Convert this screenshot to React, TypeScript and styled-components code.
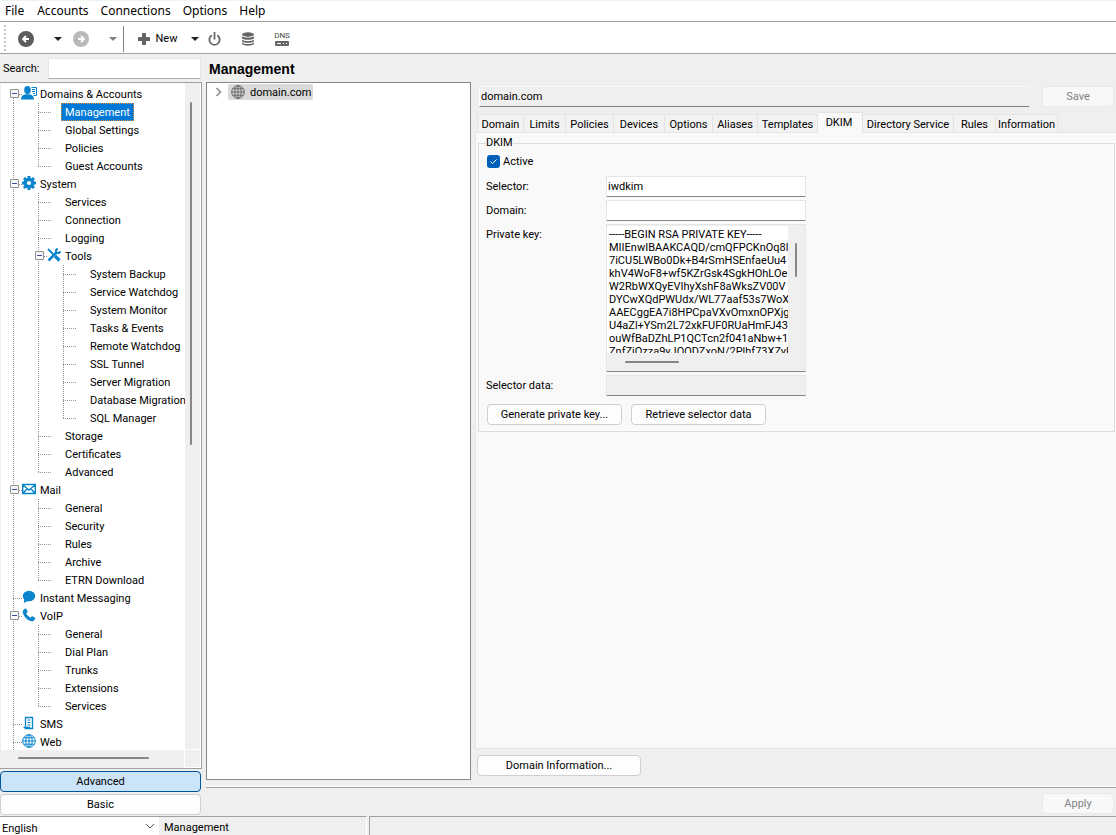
import React from 'react';
import styled, { createGlobalStyle, css } from 'styled-components';

const Global = createGlobalStyle`
  * { box-sizing: border-box; }
  body { margin: 0; background: #efefef; }
  body, button, input, textarea, select {
    font-family: Roboto, "Liberation Sans", sans-serif;
    font-size: 11px;
    color: #000;
  }
  button, input, textarea, select { margin: 0; padding: 0; outline: none; }
`;

const LINE = '#a0a0a0';

const Window = styled.div`
  display: flex;
  flex-direction: column;
  height: 100vh;
  background: #efefef;
`;
const MenuBar = styled.nav`
  display: flex;
  height: 22px;
  flex: none;
  background: #fff;
  border-top: 1px solid #eef4f2;
  border-bottom: 1px solid ${LINE};
`;
const MenuItem = styled.button`
  border: 0;
  background: none;
  padding: 0 6px;
  font-family: "Noto Sans", sans-serif;
  font-size: 12px;
  line-height: 20px;
  &:first-child { padding: 0 7px 0 5px; }
`;
const ToolBar = styled.div`
  display: flex;
  align-items: center;
  height: 32px;
  flex: none;
  padding-top: 2px;
  background: #fff;
  border-bottom: 1px solid ${LINE};
`;
const Grip = styled.span`
  width: 2px;
  height: 28px;
  margin: 0 10px 0 4px;
  background: repeating-linear-gradient(to bottom, #c4c4c4 0 2px, transparent 2px 4px);
`;
const ToolButton = styled.button<{ $w: number; $gap?: number }>`
  display: flex;
  align-items: center;
  justify-content: center;
  gap: 6px;
  width: ${p => p.$w}px;
  height: 28px;
  margin-left: ${p => p.$gap ?? 0}px;
  border: 0;
  background: none;
`;
const Separator = styled.span`
  width: 1px;
  height: 26px;
  margin: 0 1px;
  background: #808080;
`;
const Body = styled.div`
  display: flex;
  flex: 1;
  min-height: 0;
`;
const Side = styled.aside`
  display: flex;
  flex-direction: column;
  width: 202px;
  flex: none;
  padding-bottom: 1px;
`;
const SearchRow = styled.label`
  display: flex;
  align-items: center;
  height: 28px;
  padding: 1px 1px 0 3px;
`;
const SearchText = styled.span`
  width: 45px;
`;
const field = css`
  border: 1px solid #e5e5e5;
  border-bottom: 1px solid #868686;
  background: #fff;
  border-radius: 1px;
`;
const SearchInput = styled.input`
  ${field}
  flex: 1;
  min-width: 0;
  height: 21px;
  border-bottom-color: #b0b0b0;
`;
const TreeFrame = styled.div`
  display: grid;
  grid-template: minmax(0, 1fr) 18px / minmax(0, 1fr) 16px;
  flex: 1;
  min-height: 0;
  padding-left: 1px;
  border: solid ${LINE};
  border-width: 1px 1px 1px 0;
`;
const Tree = styled.div`
  background: #fff;
  padding-top: 2px;
  overflow: hidden;
`;
const ScrollV = styled.div`
  border-right: 1px solid #fff;
  border-bottom: 1px solid #fff;
  padding: 19px 0 0 5px;
`;
const ScrollH = styled.div`
  border-right: 1px solid #fff;
  padding: 7px 0 0 17px;
`;
const Corner = styled.div`
  border: solid #fff;
  border-width: 0 1px 1px 0;
`;
const Thumb = styled.div<{ $w: string; $h: string }>`
  width: ${p => p.$w};
  height: ${p => p.$h};
  border-radius: 1px;
  background: #868686;
`;
const Row = styled.div`
  display: flex;
  height: 18px;
  white-space: nowrap;
`;
const vDots = 'repeating-linear-gradient(to bottom, #949494 0 1px, transparent 1px 2px)';
const hDots = 'repeating-linear-gradient(to right, #949494 0 1px, transparent 1px 2px)';
const Guide = styled.span`
  width: 25px;
  flex: none;
  background: ${vDots} 12px 0 / 1px 100% no-repeat;
`;
const Elbow = styled.span<{ $from: string; $h: string }>`
  display: flex;
  align-items: center;
  width: 21px;
  flex: none;
  padding: 0 0 1px 9px;
  background:
    ${vDots} 12px ${p => p.$from} / 1px ${p => p.$h} no-repeat,
    ${hDots} 12px 9px / 14px 1px no-repeat;
`;
const Expander = styled.button`
  display: flex;
  align-items: center;
  justify-content: center;
  width: 9px;
  height: 9px;
  border: 1px solid #8f8f8f;
  border-radius: 1px;
  background: #f8f8f8;
  &::before { content: ""; width: 5px; height: 1px; background: #3c4fa8; }
`;
const IconSlot = styled.span<{ $leaf: boolean }>`
  display: flex;
  align-items: center;
  justify-content: center;
  width: 14px;
  flex: none;
  padding-bottom: 2px;
  background: ${p => (p.$leaf ? `${hDots} 1px 9px / 4px 1px no-repeat` : 'none')};
  svg { flex: none; }
`;
const Label = styled.span<{ $on?: boolean }>`
  padding: ${p => (p.$on ? '1px 3px 0' : '2px 4px 0')};
  border: ${p => (p.$on ? '1px dotted #e8923c' : '0')};
  background: ${p => (p.$on ? '#0078d7' : 'none')};
  color: ${p => (p.$on ? '#fff' : '#000')};
  line-height: 16px;
`;
const button = css`
  border: 1px solid #cfcfcf;
  border-radius: 4px;
  background: #fdfdfd;
`;
const ModeButton = styled.button<{ $on?: boolean }>`
  ${button}
  height: 21px;
  flex: none;
  margin: 2px 1px 0 0;
  ${p => p.$on && css`border-color: #005499; background: #cce4f7;`}
`;
const Main = styled.main`
  display: flex;
  flex-direction: column;
  flex: 1;
  min-width: 0;
  padding-left: 4px;
`;
const Title = styled.h1`
  margin: 0;
  padding-left: 3px;
  height: 28px;
  flex: none;
  font: bold 14px/30px "Liberation Sans", sans-serif;
`;
const Columns = styled.div`
  display: flex;
  flex: 1;
  min-height: 0;
`;
const DomainList = styled.div`
  width: 265px;
  flex: none;
  margin-bottom: 7px;
  padding-left: 6px;
  border: 1px solid #828790;
  background: #fff;
`;
const DomainRow = styled.div`
  display: flex;
  align-items: center;
  height: 18px;
  gap: 5px;
`;
const DomainChip = styled.span`
  display: flex;
  align-items: center;
  gap: 5px;
  height: 16px;
  padding: 0 2px 0 3px;
  border-radius: 2px;
  background: #d9d9d9;
`;
const PlainButton = styled.button`
  display: flex;
  padding: 0;
  border: 0;
  background: none;
`;
const Detail = styled.section`
  display: flex;
  flex-direction: column;
  flex: 1;
  min-width: 0;
  padding-left: 4px;
`;
const NameRow = styled.div`
  display: flex;
  align-items: center;
  gap: 13px;
  margin-top: 4px;
  padding: 0 2px 0 4px;
`;
const NameInput = styled.input`
  flex: 1;
  min-width: 0;
  height: 21px;
  padding: 0 1px;
  border: solid #fbfbfb;
  border-width: 1px 0 0 1px;
  border-bottom: 1px solid #7d7d7d;
  background: #efefef;
`;
const PaleButton = styled.button`
  width: 72px;
  height: 21px;
  flex: none;
  border: 1px solid #e9e9e9;
  border-radius: 4px;
  background: #f8f8f8;
  color: #838383;
`;
const TabList = styled.div`
  display: flex;
  align-items: flex-end;
  height: 25px;
  padding-left: 2px;
  flex: none;
`;
const Tab = styled.button<{ $w: number; $on?: boolean }>`
  width: ${p => p.$w}px;
  height: ${p => (p.$on ? 21 : 18)}px;
  flex: none;
  border: solid #e3e3e3;
  border-width: 1px 1px 0 0;
  background: ${p => (p.$on ? '#f9f9f9' : '#f2f2f2')};
  padding: ${p => (p.$on ? '0 2px 2px 0' : '1px 0 0')};
  margin-bottom: ${p => (p.$on ? -1 : 0)}px;
  ${p => p.$on && css`z-index: 1;`}
  &:first-child { border-left-width: 1px; }
`;
const Panel = styled.div`
  flex: 1;
  min-height: 0;
  padding: 3px 1px 0 2px;
  border: solid #e5e5e5;
  border-width: 1px 0 1px 1px;
  background: #f9f9f9;
`;
const Group = styled.fieldset`
  margin: 0;
  padding: 4px 7px 6px 7px;
  border: 1px solid #dcdcdc;
`;
const Legend = styled.legend`
  padding: 0;
  line-height: 14px;
`;
const CheckLabel = styled.label`
  display: flex;
  align-items: center;
  gap: 3px;
  height: 15px;
  padding-left: 1px;
`;
const Check = styled.input`
  appearance: none;
  width: 13px;
  height: 13px;
  border-radius: 3px;
  background: #005fb8 url("data:image/svg+xml,%3Csvg xmlns='http://www.w3.org/2000/svg' viewBox='0 0 13 13'%3E%3Cpath d='M3.5 6.5l2 2 4-4' fill='none' stroke='white'/%3E%3C/svg%3E");
`;
const Form = styled.div`
  display: grid;
  grid-template-columns: 120px 200px;
  row-gap: 3px;
  margin-top: 7px;
`;
const FormLabel = styled.label`
  line-height: 21px;
`;
const TextInput = styled.input`
  ${field}
  height: 21px;
  padding: 0 1px;
  &:read-only { background: #efefef; }
`;
const KeyBox = styled.div`
  ${field}
  display: grid;
  grid-template: minmax(0, 1fr) 18px / minmax(0, 1fr) 17px;
  height: 148px;
  padding-top: 1px;
  background: #efefef;
`;
const KeyText = styled.textarea`
  display: block;
  width: 100%;
  height: 100%;
  border: 0;
  padding: 2px 2px 0;
  resize: none;
  overflow: hidden;
  white-space: pre;
  line-height: 13px;
  background: #fff;
`;
const KeyScrollV = styled.div`
  padding: 17px 0 0 7px;
`;
const KeyScrollH = styled.div`
  padding: 8px 0 0 18px;
`;
const Buttons = styled.div`
  display: flex;
  gap: 9px;
  margin-top: 8px;
  padding-left: 1px;
`;
const Button = styled.button<{ $w: number }>`
  ${button}
  width: ${p => p.$w}px;
  height: 21px;
`;
const InfoRow = styled.div`
  padding: 6px 0 11px 2px;
  flex: none;
`;
const ApplyRow = styled.div`
  display: flex;
  justify-content: flex-end;
  height: 29px;
  flex: none;
  padding: 5px 2px 0 0;
  border-top: 1px solid ${LINE};
  box-shadow: 0 -1px 0 #fff;
`;
const StatusBar = styled.footer`
  display: flex;
  height: 19px;
  flex: none;
  line-height: 22px;
`;
const LangBox = styled.div`
  display: flex;
  align-items: center;
  width: 159px;
  padding-right: 4px;
  border: solid ${LINE};
  border-width: 1px 0 0;
  background: #fff;
`;
const Lang = styled.select`
  appearance: none;
  flex: 1;
  height: 18px;
  padding: 4px 0 0 2px;
  border: 0;
  background: none;
`;
const StatusCell = styled.span`
  width: 208px;
  padding-left: 5px;
  border-top: 1px solid ${LINE};
  border-right: 1px solid #fff;
`;
const StatusRest = styled.span`
  flex: 1;
  margin-left: 2px;
  border: solid ${LINE};
  border-width: 1px 0 0 1px;
`;

const BLUE = '#0a84cc';

const Globe = ({ color }: { color: string }) => (
  <svg width="14" height="14" viewBox="0 0 14 14" fill="none" stroke={color} strokeWidth="1">
    <circle cx="7" cy="7" r="6.3" />
    <ellipse cx="7" cy="7" rx="3.2" ry="6.3" />
    <path d="M7 .7v12.6M.7 7h12.6M1.6 3.8h10.8M1.6 10.2h10.8" />
  </svg>
);

const icons: Record<string, React.ReactNode> = {
  user: (
    <svg width="17" height="14" viewBox="0 0 17 14" fill={BLUE}>
      <ellipse cx="6.5" cy="4" rx="3.3" ry="4" />
      <path d="M0 13.500c0-3.600 2.200-4.500 4.800-5.200h3.400c2.600.7 4.800 1.600 4.800 5.200z" />
      <path d="M10.500 1.500h5v8h-3" fill="none" stroke={BLUE} />
      <path d="M11 3.500h3M11 5.500h3M12 7.500h2" stroke={BLUE} />
    </svg>
  ),
  gear: (
    <svg width="14" height="14" viewBox="0 0 14 14">
      <circle cx="7" cy="7" r="3.700" fill="none" stroke={BLUE} strokeWidth="3.200" />
      <path d="M7 0v3M7 11v3M0 7h3M11 7h3M2 2l2 2M10 10l2 2M12 2l-2 2M4 10l-2 2" stroke={BLUE} strokeWidth="3" />
    </svg>
  ),
  tools: (
    <svg width="14" height="14" viewBox="0 0 14 14" fill="none" stroke={BLUE}>
      <path d="M1 1l5.500 5.500" strokeWidth="1.800" />
      <path d="M8 8l4.500 4.500" strokeWidth="3.200" />
      <path d="M1.500 12.500l8-8" strokeWidth="2.600" />
      <path d="M10.800.8c-2 .6-2.400 2.600-1.200 3.700s3.200.5 3.700-1.200" strokeWidth="2" />
    </svg>
  ),
  mail: (
    <svg width="14" height="12" viewBox="0 0 14 12" fill="none" stroke={BLUE} strokeWidth="1.400">
      <path d="M.7 1.500h12.600v9H.7zM1 2l6 5 6-5M1 10.200l4.200-4.500M13 10.200L8.800 5.700" />
    </svg>
  ),
  chat: (
    <svg width="14" height="14" viewBox="0 0 14 14" fill={BLUE}>
      <ellipse cx="7" cy="6" rx="6.200" ry="5.200" />
      <path d="M2.500 8.500L1.700 13 7 10.500z" />
    </svg>
  ),
  phone: (
    <svg width="14" height="14" viewBox="0 0 14 14" fill={BLUE}>
      <path d="M1.200 2.200L3 .6c.5-.3 1-.2 1.300.3L5.500 3c.3.6.1 1-.3 1.400l-1 .9c.9 2 2.300 3.400 4.300 4.400l1-1c.4-.4.8-.5 1.400-.2l2 1.200c.5.4.5.9.2 1.300l-1.500 1.700c-.6.6-1.300.7-2.200.5C5.200 12.100 1.900 8.700.8 4.400c-.2-.9-.1-1.600.4-2.200z" />
    </svg>
  ),
  sms: (
    <svg width="14" height="14" viewBox="0 0 14 14" fill="none" stroke={BLUE}>
      <path d="M3.500 11V1.500h7v11H5M2.500 11.500h5v1h-4z" strokeWidth="1.300" />
      <path d="M5.500 4h3M5.500 6.500h3M5.500 9h3" />
    </svg>
  ),
  web: <Globe color={BLUE} />,
};

const Caret = ({ color = '#222' }: { color?: string }) => (
  <svg width="8" height="4" viewBox="0 0 8 4"><path d="M0 0h8L4 4z" fill={color} /></svg>
);
const ArrowDisc = ({ color, flip }: { color: string; flip?: boolean }) => (
  <svg width="16" height="16" viewBox="0 0 16 16">
    <circle cx="8" cy="8" r="8" fill={color} />
    <path d={flip ? 'M5 8h5M8 5l3 3-3 3' : 'M11 8H6M8 5L5 8l3 3'} fill="none" stroke="#fff" strokeWidth="1.800" />
  </svg>
);

type Item = { text: string; icon?: string; kids?: Item[] };
const leaves = (...names: string[]): Item[] => names.map(text => ({ text }));

const tree: Item[] = [
  { text: 'Domains & Accounts', icon: 'user', kids: leaves('Management', 'Global Settings', 'Policies', 'Guest Accounts') },
  {
    text: 'System', icon: 'gear', kids: [
      ...leaves('Services', 'Connection', 'Logging'),
      {
        text: 'Tools', icon: 'tools', kids: leaves('System Backup', 'Service Watchdog', 'System Monitor', 'Tasks & Events',
          'Remote Watchdog', 'SSL Tunnel', 'Server Migration', 'Database Migration', 'SQL Manager'),
      },
      ...leaves('Storage', 'Certificates', 'Advanced'),
    ],
  },
  { text: 'Mail', icon: 'mail', kids: leaves('General', 'Security', 'Rules', 'Archive', 'ETRN Download') },
  { text: 'Instant Messaging', icon: 'chat' },
  { text: 'VoIP', icon: 'phone', kids: leaves('General', 'Dial Plan', 'Trunks', 'Extensions', 'Services') },
  { text: 'SMS', icon: 'sms' },
  { text: 'Web', icon: 'web' },
];

const Branch = ({ items, level = 0 }: { items: Item[]; level?: number }) => (
  <>
    {items.map((item, i) => {
      const first = level === 0 && i === 0;
      const last = level > 0 && i === items.length - 1;
      return (
        <React.Fragment key={item.text}>
          <Row role="treeitem" aria-level={level + 1} aria-selected={item.text === 'Management'}>
            {Array.from({ length: level }, (_, n) => <Guide key={n} />)}
            <Elbow $from={first ? '9px' : '0'} $h={last ? '10px' : '100%'}>
              {item.kids && <Expander aria-label={`Collapse ${item.text}`} />}
            </Elbow>
            <IconSlot $leaf={!item.icon}>{item.icon && icons[item.icon]}</IconSlot>
            <Label $on={item.text === 'Management'}>{item.text}</Label>
          </Row>
          {item.kids && <Branch items={item.kids} level={level + 1} />}
        </React.Fragment>
      );
    })}
  </>
);

const tabs: [string, number][] = [
  ['Domain', 47], ['Limits', 42], ['Policies', 48], ['Devices', 51], ['Options', 48], ['Aliases', 45],
  ['Templates', 60], ['DKIM', 45], ['Directory Service', 91], ['Rules', 42], ['Information', 62],
];

const keyText = `-----BEGIN RSA PRIVATE KEY-----
MIIEnwIBAAKCAQD/cmQFPCKnOq8l
7iCU5LWBo0Dk+B4rSmHSEnfaeUu4
khV4WoF8+wf5KZrGsk4SgkHOhLOe
W2RbWXQyEVIhyXshF8aWksZV00V
DYCwXQdPWUdx/WL77aaf53s7WoX
AAECggEA7i8HPCpaVXvOmxnOPXjg
U4aZl+YSm2L72xkFUF0RUaHmFJ43
ouWfBaDZhLP1QCTcn2f041aNbw+1
ZnfZjOzza9yJOQDZxoN/2Plhf73XZyF`;

export default function App() {
  return (
    <Window>
      <Global />
      <MenuBar>
        {['File', 'Accounts', 'Connections', 'Options', 'Help'].map(m => <MenuItem key={m}>{m}</MenuItem>)}
      </MenuBar>
      <ToolBar>
        <Grip />
        <ToolButton $w={20} aria-label="Back"><ArrowDisc color="#5d5d5d" /></ToolButton>
        <ToolButton $w={18} $gap={13} aria-label="Back history"><Caret /></ToolButton>
        <ToolButton $w={20} $gap={4} aria-label="Forward"><ArrowDisc color="#b9b9b9" flip /></ToolButton>
        <ToolButton $w={18} $gap={13} aria-label="Forward history"><Caret color="#808080" /></ToolButton>
        <Separator />
        <ToolButton $w={65}>
          <svg width="12" height="12" viewBox="0 0 12 12"><path d="M6 0v12M0 6h12" stroke="#666" strokeWidth="4" /></svg>
          New
        </ToolButton>
        <ToolButton $w={10} aria-label="New menu"><Caret /></ToolButton>
        <ToolButton $w={28} aria-label="Power">
          <svg width="13" height="14" viewBox="0 0 13 14" fill="none" stroke="#666" strokeWidth="1.800">
            <path d="M3.800 3.200a5.200 5.200 0 1 0 5.400 0M6.500 0v7.500" />
          </svg>
        </ToolButton>
        <ToolButton $w={40} aria-label="Database">
          <svg width="12" height="14" viewBox="0 0 12 14" fill="#666">
            <ellipse cx="6" cy="2.500" rx="6" ry="2.200" />
            <path d="M0 4c2 2 10 2 12 0v2.300c-2 2-10 2-12 0zM0 7.400c2 2 10 2 12 0v1.900c-2 2-10 2-12 0zM0 10.500c2 2 10 2 12 0v1.500c-2 2.200-10 2.200-12 0z" />
          </svg>
        </ToolButton>
        <ToolButton $w={28} aria-label="DNS">
          <svg width="16" height="16" viewBox="0 0 16 16">
            <text x="8" y="7" textAnchor="middle" fontSize="8" fill="#444">DNS</text>
            <rect x="1" y="10" width="14" height="5" rx="1" fill="#666" />
            <path d="M3 12.500h4M9 12.500h1M12 12.500h1" stroke="#fff" />
          </svg>
        </ToolButton>
      </ToolBar>
      <Body>
        <Side>
          <SearchRow><SearchText>Search:</SearchText><SearchInput type="text" /></SearchRow>
          <TreeFrame>
            <Tree role="tree"><Branch items={tree} /></Tree>
            <ScrollV><Thumb $w="2px" $h="53%" /></ScrollV>
            <ScrollH><Thumb $w="79%" $h="2px" /></ScrollH>
            <Corner />
          </TreeFrame>
          <ModeButton $on>Advanced</ModeButton>
          <ModeButton>Basic</ModeButton>
        </Side>
        <Main>
          <Title>Management</Title>
          <Columns>
            <DomainList>
              <DomainRow>
                <PlainButton aria-label="Expand domain.com">
                  <svg width="10" height="10" viewBox="0 0 10 10"><path d="M3.500 1l4 4-4 4" fill="none" stroke="#888" strokeWidth="1.500" /></svg>
                </PlainButton>
                <DomainChip><Globe color="#666" />domain.com</DomainChip>
              </DomainRow>
            </DomainList>
            <Detail>
              <NameRow>
                <NameInput aria-label="Domain name" readOnly value="domain.com" />
                <PaleButton disabled>Save</PaleButton>
              </NameRow>
              <TabList role="tablist">
                {tabs.map(([name, w]) => (
                  <Tab key={name} role="tab" $w={w} $on={name === 'DKIM'} aria-selected={name === 'DKIM'}>{name}</Tab>
                ))}
              </TabList>
              <Panel>
                <Group>
                  <Legend>DKIM</Legend>
                  <CheckLabel><Check type="checkbox" defaultChecked />Active</CheckLabel>
                  <Form>
                    <FormLabel htmlFor="selector">Selector:</FormLabel>
                    <TextInput id="selector" defaultValue="iwdkim" />
                    <FormLabel htmlFor="domain">Domain:</FormLabel>
                    <TextInput id="domain" />
                    <FormLabel htmlFor="key">Private key:</FormLabel>
                    <KeyBox>
                      <KeyText id="key" spellCheck={false} wrap="off" defaultValue={keyText} />
                      <KeyScrollV><Thumb $w="2px" $h="34px" /></KeyScrollV>
                      <KeyScrollH><Thumb $w="54px" $h="2px" /></KeyScrollH>
                    </KeyBox>
                    <FormLabel htmlFor="data">Selector data:</FormLabel>
                    <TextInput id="data" readOnly />
                  </Form>
                  <Buttons>
                    <Button $w={135}>Generate private key...</Button>
                    <Button $w={135}>Retrieve selector data</Button>
                  </Buttons>
                </Group>
              </Panel>
              <InfoRow><Button $w={164}>Domain Information...</Button></InfoRow>
            </Detail>
          </Columns>
          <ApplyRow><PaleButton disabled>Apply</PaleButton></ApplyRow>
        </Main>
      </Body>
      <StatusBar>
        <LangBox>
          <Lang aria-label="Language"><option>English</option></Lang>
          <svg width="10" height="6" viewBox="0 0 10 6"><path d="M1 1l4 4 4-4" fill="none" stroke="#555" /></svg>
        </LangBox>
        <StatusCell>Management</StatusCell>
        <StatusRest />
      </StatusBar>
    </Window>
  );
}
